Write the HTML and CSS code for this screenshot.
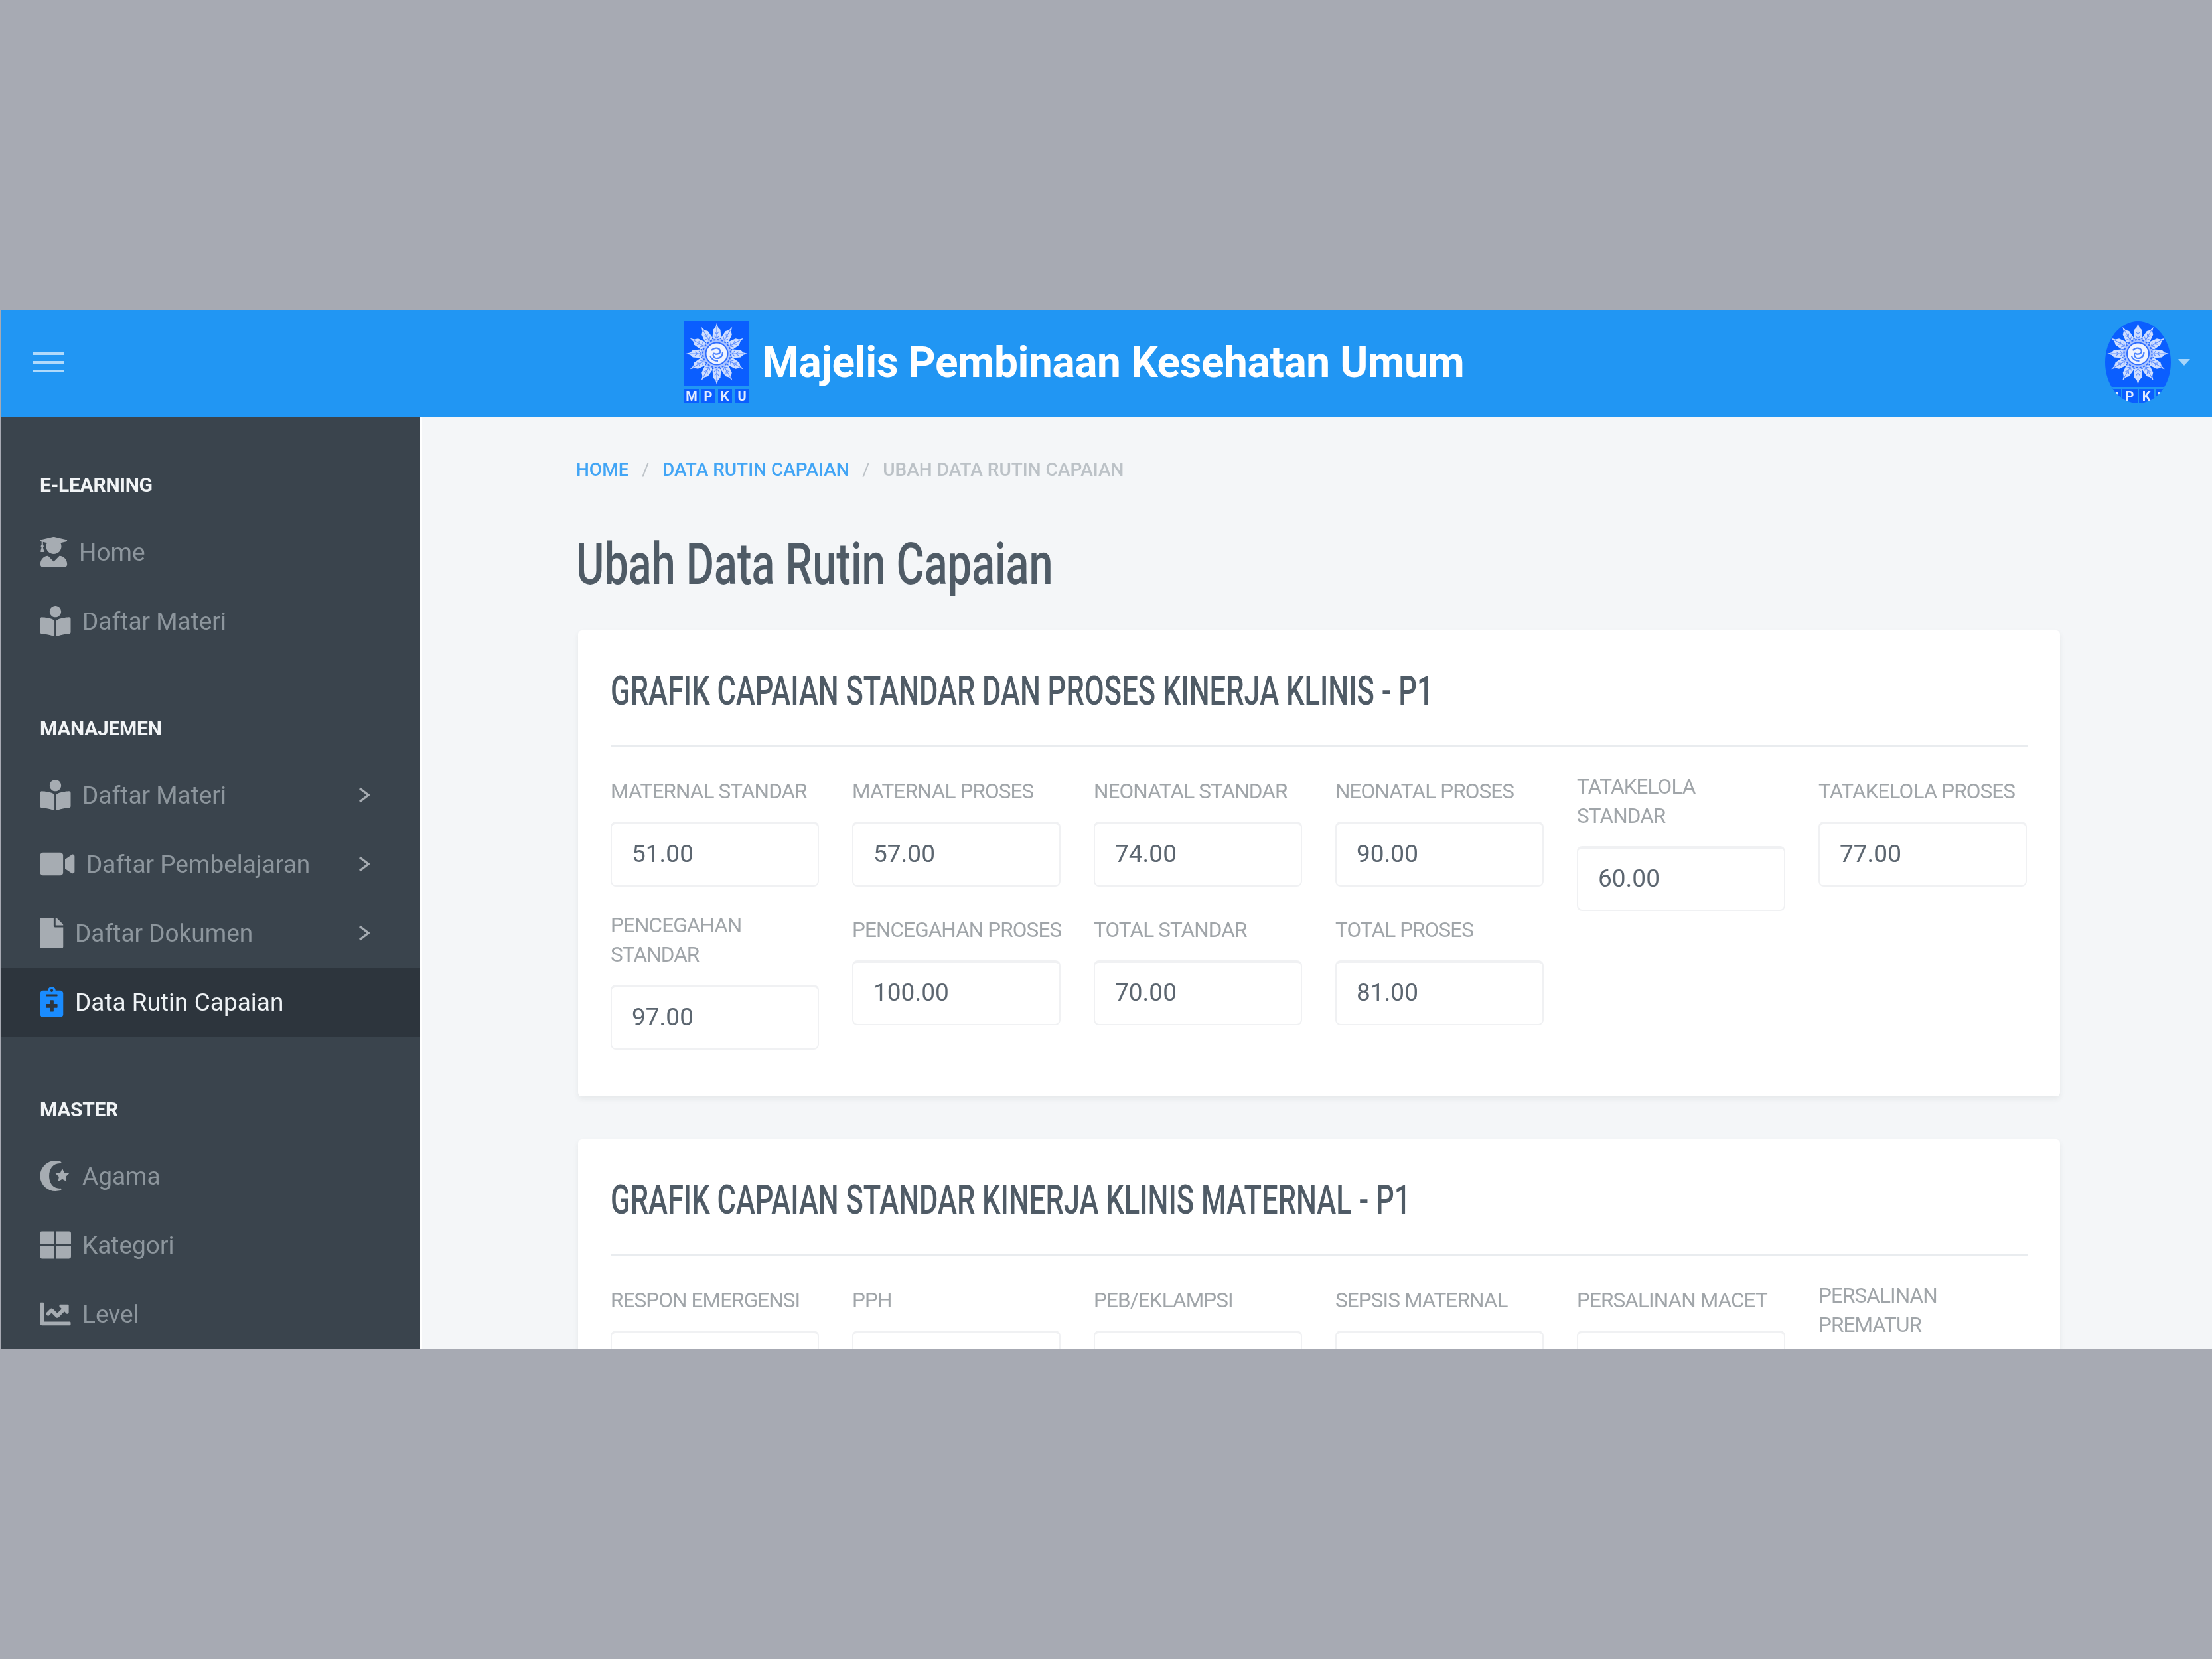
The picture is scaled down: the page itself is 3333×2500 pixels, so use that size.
FILE: index.html
```html
<!DOCTYPE html>
<html lang="id">
<head>
<meta charset="utf-8">
<title>Ubah Data Rutin Capaian</title>
<link rel="stylesheet" href="styles.css">
</head>
<body>
<svg class="defs" width="0" height="0" aria-hidden="true">
  <defs>
    <g id="ray">
      <path d="M0-46.5 1.800-40 5.500-36 6.500-24 0-19-6.500-24-5.500-36-1.800-40z" fill="#cfdeff"/>
      <path d="M0-41V-22M-3-33 0-29 3-33M-4-27 0-23 4-27" fill="none" stroke="#5f8fff" stroke-width="1.100"/>
    </g>
    <g id="sun">
      <use href="#ray"/>
      <use href="#ray" transform="rotate(30)"/>
      <use href="#ray" transform="rotate(60)"/>
      <use href="#ray" transform="rotate(90)"/>
      <use href="#ray" transform="rotate(120)"/>
      <use href="#ray" transform="rotate(150)"/>
      <use href="#ray" transform="rotate(180)"/>
      <use href="#ray" transform="rotate(210)"/>
      <use href="#ray" transform="rotate(240)"/>
      <use href="#ray" transform="rotate(270)"/>
      <use href="#ray" transform="rotate(300)"/>
      <use href="#ray" transform="rotate(330)"/>
      <circle r="23" fill="#a9c3ff"/>
      <circle r="21" fill="none" stroke="#2f6dff" stroke-width="2" stroke-dasharray="3 2.500"/>
      <circle r="17.500" fill="#2f6dff"/>
      <circle r="15.500" fill="#eef3ff"/>
      <path d="M-8-5C-3-10 3-9 5-5S1 2-3 0 -6 7 0 7 9 3 9-3M-10 3C-8 9-4 11 2 11" fill="none" stroke="#4a82ff" stroke-width="2.200"/>
    </g>
    <symbol id="i-grad" viewBox="0 0 448 512"><path d="M319.4 320.6L224 416l-95.4-95.4C57.1 323.7 0 382.2 0 454.4v9.6c0 26.5 21.5 48 48 48h352c26.5 0 48-21.5 48-48v-9.6c0-72.2-57.1-130.7-128.6-133.8zM13.6 79.8l6.4 1.5v58.4c-7 4.2-12 11.5-12 20.3 0 8.4 4.6 15.4 11.1 19.7L3.5 242c-1.7 6.9 2.1 14 7.6 14h41.8c5.5 0 9.3-7.1 7.6-14l-15.6-62.3C51.4 175.4 56 168.4 56 160c0-8.8-5-16.1-12-20.3V87.1l66 15.9c-8.6 17.2-14 36.4-14 57 0 70.7 57.3 128 128 128s128-57.3 128-128c0-20.6-5.3-39.8-14-57l96.3-23.2c18.2-4.4 18.2-27.1 0-31.5l-190.4-46c-13-3.1-26.7-3.1-39.7 0L13.6 48.2c-18.1 4.4-18.1 27.2 0 31.6z"/></symbol>
    <symbol id="i-book" viewBox="0 0 512 512"><path d="M352 96c0-53.02-42.98-96-96-96s-96 42.98-96 96 42.98 96 96 96 96-42.98 96-96zM233.59 241.1c-59.33-36.32-155.43-46.3-203.79-49.05C13.55 191.13 0 203.51 0 219.14v222.8c0 14.33 11.59 26.28 26.49 27.05 43.66 2.29 131.99 10.68 193.04 41.43 9.37 4.72 20.48-1.71 20.48-11.87V252.56c-.01-4.67-2.32-8.95-6.42-11.46zm248.61-49.05c-48.35 2.74-144.46 12.73-203.78 49.05-4.1 2.51-6.41 6.96-6.41 11.63v245.79c0 10.19 11.14 16.63 20.54 11.9 61.04-30.72 149.32-39.11 192.97-41.4 14.9-.78 26.49-12.73 26.49-27.06V219.14c-.01-15.63-13.56-28.01-29.81-27.09z"/></symbol>
    <symbol id="i-video" viewBox="0 0 576 512"><path d="M336.2 64H47.8C21.4 64 0 85.4 0 111.8v288.4C0 426.6 21.4 448 47.8 448h288.4c26.4 0 47.8-21.4 47.8-47.8V111.8c0-26.4-21.4-47.8-47.8-47.8zm189.4 37.7L416 177.3v157.4l109.6 75.5c21.2 14.6 50.4-.3 50.4-25.8V127.5c0-25.4-29.1-40.4-50.4-25.8z"/></symbol>
    <symbol id="i-file" viewBox="0 0 384 512"><path d="M224 136V0H24C10.7 0 0 10.7 0 24v464c0 13.3 10.7 24 24 24h336c13.3 0 24-10.7 24-24V160H248c-13.2 0-24-10.8-24-24zm160-14.1v6.1H256V0h6.1c6.4 0 12.5 2.5 17 7l97.9 98c4.5 4.5 7 10.6 7 16.9z"/></symbol>
    <symbol id="i-notes" viewBox="0 0 384 512"><path d="M336 64h-80c0-35.3-28.7-64-64-64s-64 28.7-64 64H48C21.5 64 0 85.5 0 112v352c0 26.5 21.5 48 48 48h288c26.5 0 48-21.5 48-48V112c0-26.5-21.5-48-48-48zM192 40c13.3 0 24 10.7 24 24s-10.7 24-24 24-24-10.7-24-24 10.7-24 24-24zm96 304c0 4.4-3.6 8-8 8h-56v56c0 4.4-3.6 8-8 8h-48c-4.4 0-8-3.6-8-8v-56h-56c-4.4 0-8-3.6-8-8v-48c0-4.4 3.6-8 8-8h56v-56c0-4.4 3.6-8 8-8h48c4.4 0 8 3.6 8 8v56h56c4.4 0 8 3.6 8 8v48zm0-192c0 4.4-3.6 8-8 8H104c-4.4 0-8-3.6-8-8v-16c0-4.4 3.6-8 8-8h176c4.4 0 8 3.6 8 8v16z"/></symbol>
    <symbol id="i-moon" viewBox="0 0 512 512"><path d="M345 16C315 5 286 0 256 0 115 0 0 115 0 256s115 256 256 256c30 0 59-5 89-16 17-6 12-30-5-30-3 0-6 .5-9 .5-116 0-180-95-180-210.500S215 45 331 45c3 0 6 .5 9 .5 17 0 22-23 5-29.500z"/><path d="M372 132l34 72 80 10-58 55 15 79-71-38-71 38 15-79-58-55 80-10z"/></symbol>
    <symbol id="i-grid" viewBox="0 0 46 40"><path d="M0 3a3 3 0 0 1 3-3h18v18H0zM24 0h19a3 3 0 0 1 3 3v15H24zM0 21h21v19H3a3 3 0 0 1-3-3zM24 21h22v16a3 3 0 0 1-3 3H24z"/></symbol>
    <symbol id="i-chart" viewBox="0 0 512 512"><path d="M496 384H64V79c0-8.84-7.16-16-16-16H16C7.16 63 0 70.16 0 79v336c0 17.67 14.33 32 32 32h464c8.84 0 16-7.16 16-16v-32c0-8.84-7.16-16-16-16zM464 96H345.94c-21.38 0-32.09 25.85-16.97 40.97l32.4 32.4L288 242.75l-73.37-73.37c-12.5-12.5-32.76-12.5-45.25 0l-68.69 68.69c-6.25 6.25-6.25 16.38 0 22.63l22.62 22.62c6.25 6.25 16.38 6.25 22.63 0L192 237.25l73.37 73.37c12.5 12.5 32.76 12.5 45.25 0l96-96 32.4 32.4c15.12 15.12 40.97 4.41 40.97-16.97V112c0-8.84-7.16-16-16-16z"/></symbol>
    <symbol id="i-chev" viewBox="0 0 18 26"><path d="M2 3 15 13 2 23" fill="none" stroke="currentColor" stroke-width="3.4"/></symbol>
  </defs>
</svg>

<div class="frame">
  <header class="topbar">
    <button class="burger" type="button" aria-label="Menu"><span></span><span></span><span></span></button>
    <div class="brand">
      <svg class="logo" viewBox="0 0 98 124" role="img" aria-label="MPKU">
        <rect width="98" height="98" fill="#0a5eff"/>
        <use href="#sun" transform="translate(49 49)"/>
        <rect y="102" width="22" height="22" fill="#0a5eff"/>
        <rect x="26" y="102" width="21" height="22" fill="#0a5eff"/>
        <rect x="51" y="102" width="21" height="22" fill="#0a5eff"/>
        <rect x="76" y="102" width="22" height="22" fill="#0a5eff"/>
        <text class="logo-letter" x="11" y="119.500">M</text>
        <text class="logo-letter" x="36" y="119.500">P</text>
        <text class="logo-letter" x="61" y="119.500">K</text>
        <text class="logo-letter" x="87" y="119.500">U</text>
      </svg>
      <span class="brand-name">Majelis Pembinaan Kesehatan Umum</span>
    </div>
    <div class="user">
      <svg class="avatar" viewBox="0 0 99 124" role="img" aria-label="Profil">
        <defs><clipPath id="oval"><ellipse cx="49.500" cy="62" rx="49.500" ry="62"/></clipPath></defs>
        <g clip-path="url(#oval)">
          <rect width="99" height="124" fill="#0a5eff"/>
          <use href="#sun" transform="translate(49.500 49)"/>
          <rect y="99" width="99" height="3" fill="#2196f3"/>
          <rect x="24" y="102" width="2" height="22" fill="#2196f3"/>
          <rect x="49" y="102" width="2" height="22" fill="#2196f3"/>
          <rect x="74" y="102" width="2" height="22" fill="#2196f3"/>
          <rect x="16" y="106" width="3" height="6" fill="#e3ecff"/>
          <rect x="80" y="106" width="3" height="6" fill="#e3ecff"/>
          <text class="logo-letter" x="37" y="119.500">P</text>
          <text class="logo-letter" x="62" y="119.500">K</text>
        </g>
      </svg>
      <span class="caret"></span>
    </div>
  </header>

  <div class="body">
    <nav class="sidebar">
      <div class="group">
        <div class="group-title">E-LEARNING</div>
        <a class="item"><svg class="ico w-40"><use href="#i-grad"/></svg><span>Home</span></a>
        <a class="item"><svg class="ico w-46"><use href="#i-book"/></svg><span>Daftar Materi</span></a>
      </div>
      <div class="group">
        <div class="group-title">MANAJEMEN</div>
        <a class="item"><svg class="ico w-46"><use href="#i-book"/></svg><span>Daftar Materi</span><svg class="chev"><use href="#i-chev"/></svg></a>
        <a class="item"><svg class="ico w-53"><use href="#i-video"/></svg><span>Daftar Pembelajaran</span><svg class="chev"><use href="#i-chev"/></svg></a>
        <a class="item"><svg class="ico w-36"><use href="#i-file"/></svg><span>Daftar Dokumen</span><svg class="chev"><use href="#i-chev"/></svg></a>
        <a class="item active"><svg class="ico w-36"><use href="#i-notes"/></svg><span>Data Rutin Capaian</span></a>
      </div>
      <div class="group">
        <div class="group-title">MASTER</div>
        <a class="item"><svg class="ico w-46"><use href="#i-moon"/></svg><span>Agama</span></a>
        <a class="item"><svg class="ico w-46"><use href="#i-grid"/></svg><span>Kategori</span></a>
        <a class="item"><svg class="ico w-46"><use href="#i-chart"/></svg><span>Level</span></a>
      </div>
    </nav>

    <main class="main">
      <ol class="crumbs">
        <li><a>HOME</a></li>
        <li class="sep">/</li>
        <li><a>DATA RUTIN CAPAIAN</a></li>
        <li class="sep">/</li>
        <li class="current">UBAH DATA RUTIN CAPAIAN</li>
      </ol>
      <h1 class="page-title">Ubah Data Rutin Capaian</h1>

      <section class="card">
        <div class="card-head"><h2 class="card-title">GRAFIK CAPAIAN STANDAR DAN PROSES KINERJA KLINIS - P1</h2></div>
        <div class="fields">
          <label class="field one"><span>MATERNAL STANDAR</span><input type="text" value="51.00"></label>
          <label class="field one"><span>MATERNAL PROSES</span><input type="text" value="57.00"></label>
          <label class="field one"><span>NEONATAL STANDAR</span><input type="text" value="74.00"></label>
          <label class="field one"><span>NEONATAL PROSES</span><input type="text" value="90.00"></label>
          <label class="field"><span>TATAKELOLA STANDAR</span><input type="text" value="60.00"></label>
          <label class="field one"><span>TATAKELOLA PROSES</span><input type="text" value="77.00"></label>
          <label class="field"><span>PENCEGAHAN STANDAR</span><input type="text" value="97.00"></label>
          <label class="field one"><span>PENCEGAHAN PROSES</span><input type="text" value="100.00"></label>
          <label class="field one"><span>TOTAL STANDAR</span><input type="text" value="70.00"></label>
          <label class="field one"><span>TOTAL PROSES</span><input type="text" value="81.00"></label>
        </div>
      </section>

      <section class="card">
        <div class="card-head"><h2 class="card-title">GRAFIK CAPAIAN STANDAR KINERJA KLINIS MATERNAL - P1</h2></div>
        <div class="fields">
          <label class="field one"><span>RESPON EMERGENSI</span><input type="text"></label>
          <label class="field one"><span>PPH</span><input type="text"></label>
          <label class="field one"><span>PEB/EKLAMPSI</span><input type="text"></label>
          <label class="field one"><span>SEPSIS MATERNAL</span><input type="text"></label>
          <label class="field one"><span>PERSALINAN MACET</span><input type="text"></label>
          <label class="field"><span>PERSALINAN PREMATUR</span><input type="text"></label>
        </div>
      </section>
    </main>
  </div>
</div>
</body>
</html>
```

FILE: styles.css
```css
* { box-sizing: border-box; }

html, body { height: 100%; }

body {
  margin: 0;
  background: #a7aab3;
  display: flex;
  align-items: center;
  font-family: Roboto, "Liberation Sans", sans-serif;
}

.defs { position: absolute; }

.frame {
  width: 100%;
  height: 1566px;
  margin-left: 1px;
  overflow: hidden;
  display: flex;
  flex-direction: column;
  background: #f4f6f8;
  filter: blur(.6px);
}

/* Top bar */
.topbar {
  flex: 0 0 161px;
  background: #2196f3;
  display: flex;
  align-items: center;
}

.burger {
  width: 46px;
  margin: 0 0 3px 49px;
  padding: 0;
  border: 0;
  background: none;
  display: flex;
  flex-direction: column;
  gap: 9px;
}

.burger span {
  display: block;
  height: 4px;
  background: #b0dafb;
}

.brand {
  margin: 0 0 3px 935px;
  display: flex;
  align-items: center;
  gap: 19px;
}

.logo { width: 98px; height: 124px; }

.logo-letter {
  font: 700 20px Roboto, sans-serif;
  fill: #e3ecff;
  text-anchor: middle;
}

.brand-name {
  font-size: 64px;
  font-weight: 700;
  letter-spacing: -.450px;
  color: #fff;
  white-space: nowrap;
}

.user {
  margin: 0 33px 3px auto;
  display: flex;
  align-items: center;
  gap: 11px;
}

.avatar { width: 99px; height: 124px; }

.caret {
  width: 0;
  height: 0;
  border-left: 9px solid transparent;
  border-right: 9px solid transparent;
  border-top: 10px solid #a6d5fa;
}

/* Layout below the bar */
.body {
  flex: 1;
  min-height: 0;
  display: flex;
}

/* Sidebar */
.sidebar {
  flex: 0 0 632px;
  background: #3a444d;
  padding-top: 71px;
}

.group + .group { margin-top: 78px; }

.group-title {
  height: 60px;
  margin: 0 0 21px 59px;
  font-size: 30px;
  font-weight: 700;
  line-height: 63px;
  letter-spacing: -.3px;
  color: #f1f4f6;
}

.group + .group .group-title { margin-bottom: 20px; }

.item {
  height: 104px;
  padding-left: 59px;
  display: flex;
  align-items: center;
  gap: 17px;
  font-size: 37px;
  color: #8d969d;
}

.item.active {
  background: #2d353d;
  color: #eef2f5;
}

.ico { height: 46px; fill: #a6acb2; flex: none; }
.item.active .ico { fill: #1a8cff; }

.w-36 { width: 36px; }
.w-40 { width: 42px; }
.w-46 { width: 47px; }
.w-53 { width: 53px; }

.chev {
  width: 18px;
  height: 26px;
  margin-left: auto;
  margin-right: 75px;
  color: #a6acb2;
}

/* Main column */
.main {
  flex: 1;
  min-width: 0;
  border-left: 3px solid #fff;
  padding: 0 229px 0 232px;
}

.crumbs {
  list-style: none;
  margin: 0;
  padding: 54px 0 0;
  height: 114px;
  display: flex;
  gap: 19.500px;
  line-height: 52px;
  font-size: 28px;
  font-weight: 500;
}

.crumbs a { color: #42a5f5; }
.crumbs .sep { color: #bcc2c7; font-weight: 400; }
.crumbs .current { color: #bcc2c7; }

.page-title {
  margin: 48px 0 0;
  height: 160px;
  font-size: 88px;
  line-height: 120px;
  font-weight: 500;
  color: #4f5b66;
  white-space: nowrap;
  transform: scaleX(.736);
  transform-origin: 0 0;
}

.card {
  margin: 0 0 65px 3px;
  background: #fff;
  border-radius: 6px;
  box-shadow: 0 4px 8px rgba(40, 50, 60, .07);
  padding: 41px 49px 70px;
}

.card-head {
  height: 134px;
  margin-bottom: 39px;
  border-bottom: 2px solid #e9ecef;
}

.card-title {
  margin: 0;
  font-size: 62px;
  line-height: 100px;
  font-weight: 500;
  color: #4f5b66;
  white-space: nowrap;
  transform: scaleX(.702);
  transform-origin: 0 0;
}

.fields {
  display: grid;
  grid-template-columns: repeat(6, 314px);
  column-gap: 50px;
  align-items: start;
}

.field { display: block; }

.field span {
  display: block;
  margin-bottom: 23px;
  font-size: 31.500px;
  letter-spacing: -.900px;
  line-height: 44px;
  color: #a0a5a9;
}

.field.one span {
  padding-top: 7px;
  white-space: nowrap;
}

.field input {
  display: block;
  width: 100%;
  height: 98px;
  padding: 0 30px 4px;
  border: 2px solid #f0f1f3;
  border-top-width: 4px;
  border-radius: 8px;
  background: #fff;
  font: 400 37px Roboto, sans-serif;
  color: #5c6670;
  outline: none;
}
```
